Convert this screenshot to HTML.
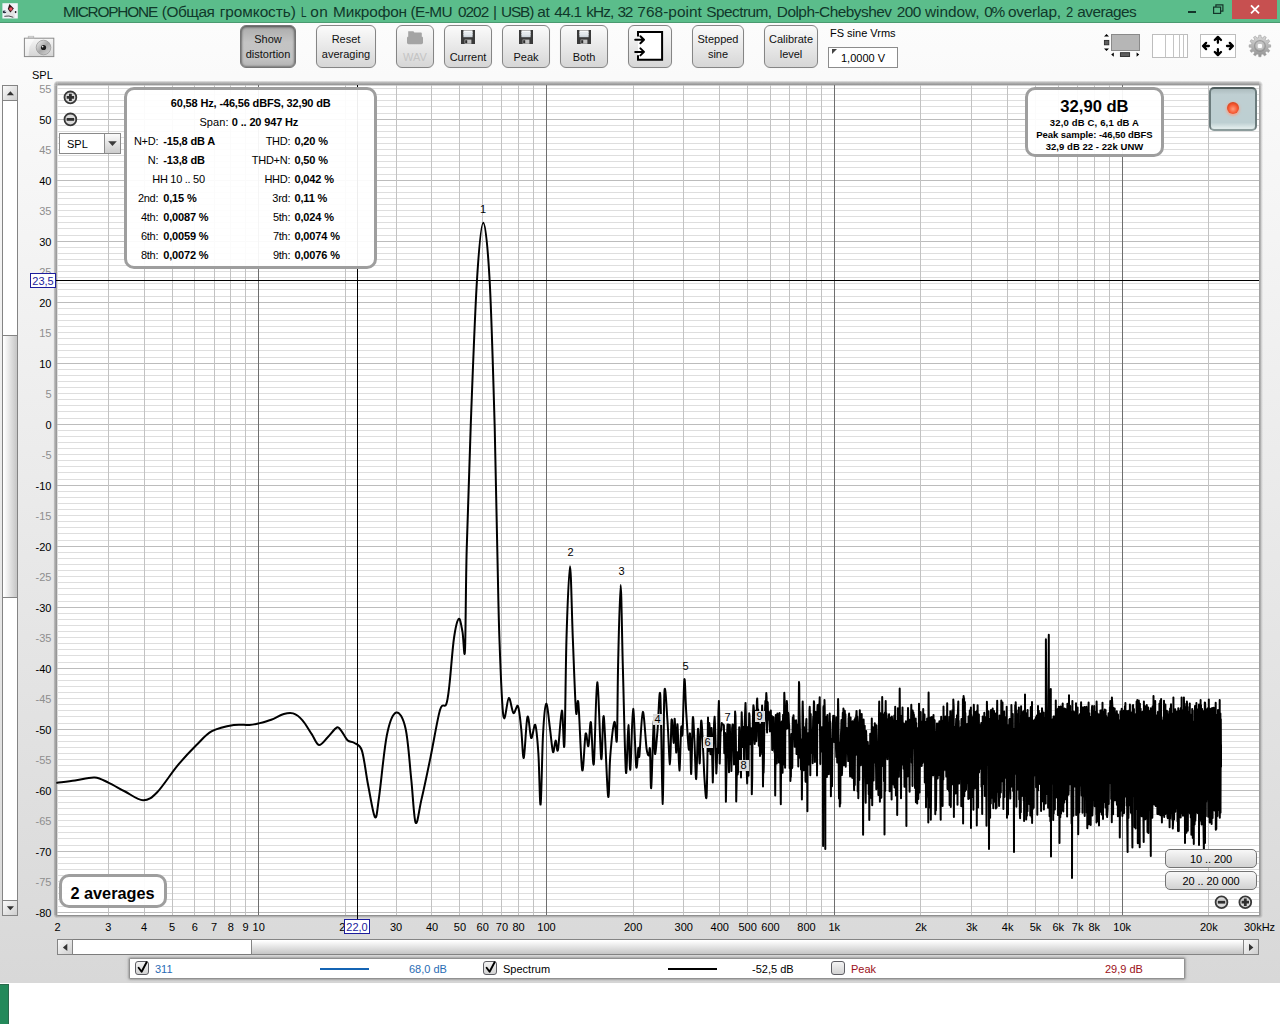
<!DOCTYPE html>
<html lang="en">
<head>
<meta charset="utf-8">
<title>RTA</title>
<style>
*{box-sizing:border-box;margin:0;padding:0}
html,body{width:1280px;height:1024px;overflow:hidden;background:#fff}
body{position:relative;font-family:"Liberation Sans",sans-serif;font-size:11px;color:#000}
.abs{position:absolute}
#title{left:0;top:0;width:1280px;height:23px;background:#5bbd8b;border-bottom:1px solid #4a9a70}
#ttext{left:0;top:1px;width:1200px;height:21px;font-size:15.4px;line-height:21px;color:#10382a;white-space:nowrap}
#ttext span{position:absolute;top:0;white-space:nowrap}
#close{left:1232px;top:0;width:45px;height:19px;background:#c75050}
#win{left:0;top:23px;width:1280px;height:960px;background:linear-gradient(#fcfcfc,#d8d8d8)}
#strip{left:0;top:984px;width:9px;height:40px;background:#23895a;border-top:1px solid #2a6a4c;border-right:1px solid #2a6a4c}
.btn{position:absolute;top:25px;height:43px;border:1px solid #858585;border-radius:6px;background:linear-gradient(#fbfbfb,#d6d6d6);text-align:center;font-size:11px;line-height:15px;color:#111;box-shadow:0 0 1px rgba(0,0,0,.15)}
.btn.two{padding-top:6px}
.btn.ico{padding-top:24px}
.btn.pressed{background:linear-gradient(#ababab,#c4c4c4 40%,#c2c2c2 80%,#b4b4b4);border-color:#747474;box-shadow:inset 0 1px 3px rgba(0,0,0,.4),inset 0 0 2px 1px rgba(0,0,0,.25)}
.btn.dis{color:#c4c4c4}
.btn svg{position:absolute;left:50%;top:4px;margin-left:-8px}
.ylab{position:absolute;left:10px;width:41.5px;text-align:right;font-size:11px;line-height:12px;height:12px}
.ylab.m{color:#8e8e8e}
.xlab{position:absolute;top:921px;width:40px;margin-left:-20px;text-align:center;font-size:11px;line-height:12px;height:12px;white-space:nowrap}
.box{position:absolute;border:3px solid #9e9e9e;border-radius:10px;background:rgba(255,255,255,.93)}
.row{position:absolute;left:0;height:13px;line-height:13px;font-size:11px;white-space:nowrap;letter-spacing:-.28px}
.row b{font-weight:bold;letter-spacing:-.15px}
.l1{left:0;width:31.5px;text-align:right}
.hl{position:absolute;font-size:11px;line-height:11px;height:11px;width:10px;margin-left:-5px;text-align:center}
.hl.g{background:#dcdcdc}
.cur{position:absolute;border:1px solid #1c1c9c;background:#fff;color:#1c1c9c;font-size:11px;line-height:15px;text-align:center}
.sbtn{position:absolute;left:1165px;width:92px;height:19px;border:1px solid #747474;border-radius:5px;background:linear-gradient(#f8f8f8,#d2d2d2);font-size:11px;line-height:18px;text-align:center;letter-spacing:-.1px}
.cb{position:absolute;top:961px;width:14px;height:14px;border:1px solid #5e5e64;border-radius:3px;background:linear-gradient(#f4f4f4,#d2d2d2)}
.lg{position:absolute;top:963px;font-size:11px;line-height:12px;white-space:nowrap}
</style>
</head>
<body>
<div id="win" class="abs"></div>
<div id="title" class="abs"></div>
<div id="ttext" class="abs"><span style="left:63.05px;letter-spacing:-1.213px">MICROPHONE</span><span style="left:161.80px;letter-spacing:-0.470px">(Общая</span><span style="left:219.80px;letter-spacing:-0.077px">громкость)</span><span style="left:300.50px;transform:scaleX(0.642);transform-origin:0 0">L</span><span style="left:310.30px;letter-spacing:0.387px">on</span><span style="left:333.05px;letter-spacing:-0.137px">Микрофон</span><span style="left:410.55px;letter-spacing:-0.611px">(E-MU</span><span style="left:458.05px;letter-spacing:-1.025px">0202</span><span style="left:492.90px;letter-spacing:-1.300px">|</span><span style="left:501.05px;letter-spacing:-1.158px">USB)</span><span style="left:537.30px;letter-spacing:-0.347px">at</span><span style="left:554.30px;letter-spacing:-0.705px">44.1</span><span style="left:586.30px;letter-spacing:-0.974px">kHz,</span><span style="left:617.55px;letter-spacing:-1.362px">32</span><span style="left:637.30px;letter-spacing:0.051px">768-point</span><span style="left:706.30px;letter-spacing:-0.555px">Spectrum,</span><span style="left:776.80px;letter-spacing:-0.513px">Dolph-Chebyshev</span><span style="left:896.80px;letter-spacing:-0.596px">200</span><span style="left:925.05px;letter-spacing:-0.052px">window,</span><span style="left:984.30px;letter-spacing:-1.425px">0%</span><span style="left:1008.05px;letter-spacing:-0.264px">overlap,</span><span style="left:1065.75px;transform:scaleX(0.847);transform-origin:0 0">2</span><span style="left:1077.30px;letter-spacing:-0.554px">averages</span></div>
<div id="close" class="abs"></div>
<div id="strip" class="abs"></div>

<!-- toolbar buttons -->
<div class="btn two pressed" style="left:240px;width:56px">Show<br>distortion</div>
<div class="btn two" style="left:316px;width:60px">Reset<br>averaging</div>
<div class="btn ico dis" style="left:396px;width:38px">WAV</div>
<div class="btn ico" style="left:444px;width:48px">Current</div>
<div class="btn ico" style="left:502px;width:48px">Peak</div>
<div class="btn ico" style="left:560px;width:48px">Both</div>
<div class="btn" style="left:628px;width:44px"></div>
<div class="btn two" style="left:692px;width:52px">Stepped<br>sine</div>
<div class="btn two" style="left:764px;width:54px">Calibrate<br>level</div>
<div class="abs" style="left:830px;top:27px;font-size:11px;line-height:12px">FS sine Vrms</div>
<div class="abs" style="left:828px;top:47px;width:70px;height:21px;border:1px solid #8c8c8c;background:#fff;font-size:11px;line-height:20px;padding-left:12px">1,0000 V</div>

<div class="abs" style="left:32px;top:69px;font-size:11px;line-height:12px">SPL</div>

<div class="ylab" style="top:906.8px">-80</div>
<div class="ylab m" style="top:876.3px">-75</div>
<div class="ylab" style="top:845.8px">-70</div>
<div class="ylab m" style="top:815.3px">-65</div>
<div class="ylab" style="top:784.8px">-60</div>
<div class="ylab m" style="top:754.3px">-55</div>
<div class="ylab" style="top:723.8px">-50</div>
<div class="ylab m" style="top:693.3px">-45</div>
<div class="ylab" style="top:662.8px">-40</div>
<div class="ylab m" style="top:632.3px">-35</div>
<div class="ylab" style="top:601.8px">-30</div>
<div class="ylab m" style="top:571.3px">-25</div>
<div class="ylab" style="top:540.8px">-20</div>
<div class="ylab m" style="top:510.3px">-15</div>
<div class="ylab" style="top:479.8px">-10</div>
<div class="ylab m" style="top:449.3px">-5</div>
<div class="ylab" style="top:418.8px">0</div>
<div class="ylab m" style="top:388.3px">5</div>
<div class="ylab" style="top:357.8px">10</div>
<div class="ylab m" style="top:327.3px">15</div>
<div class="ylab" style="top:296.8px">20</div>
<div class="ylab m" style="top:266.3px">25</div>
<div class="ylab" style="top:235.8px">30</div>
<div class="ylab m" style="top:205.3px">35</div>
<div class="ylab" style="top:174.8px">40</div>
<div class="ylab m" style="top:144.3px">45</div>
<div class="ylab" style="top:113.8px">50</div>
<div class="ylab m" style="top:83.3px">55</div>
<div class="xlab" style="left:57.5px">2</div>
<div class="xlab" style="left:108.2px">3</div>
<div class="xlab" style="left:144.1px">4</div>
<div class="xlab" style="left:172.0px">5</div>
<div class="xlab" style="left:194.8px">6</div>
<div class="xlab" style="left:214.1px">7</div>
<div class="xlab" style="left:230.8px">8</div>
<div class="xlab" style="left:245.5px">9</div>
<div class="xlab" style="left:258.7px">10</div>
<div class="xlab" style="left:345.3px">20</div>
<div class="xlab" style="left:396.0px">30</div>
<div class="xlab" style="left:432.0px">40</div>
<div class="xlab" style="left:459.9px">50</div>
<div class="xlab" style="left:482.7px">60</div>
<div class="xlab" style="left:501.9px">70</div>
<div class="xlab" style="left:518.6px">80</div>
<div class="xlab" style="left:546.5px">100</div>
<div class="xlab" style="left:633.2px">200</div>
<div class="xlab" style="left:683.8px">300</div>
<div class="xlab" style="left:719.8px">400</div>
<div class="xlab" style="left:747.7px">500</div>
<div class="xlab" style="left:770.5px">600</div>
<div class="xlab" style="left:806.5px">800</div>
<div class="xlab" style="left:834.3px">1k</div>
<div class="xlab" style="left:921.0px">2k</div>
<div class="xlab" style="left:971.7px">3k</div>
<div class="xlab" style="left:1007.6px">4k</div>
<div class="xlab" style="left:1035.5px">5k</div>
<div class="xlab" style="left:1058.3px">6k</div>
<div class="xlab" style="left:1077.6px">7k</div>
<div class="xlab" style="left:1094.3px">8k</div>
<div class="xlab" style="left:1122.2px">10k</div>
<div class="xlab" style="left:1208.8px">20k</div>
<div class="xlab" style="left:1259.5px">30kHz</div>

<!-- plot -->

<svg class="abs" style="left:0;top:0" width="1280" height="1024" viewBox="0 0 1280 1024" font-family="Liberation Sans, sans-serif">
<defs>
<linearGradient id="fL" x1="0" y1="0" x2="1" y2="0"><stop offset="0" stop-color="#737373" stop-opacity="0"/><stop offset=".28" stop-color="#737373" stop-opacity=".4"/><stop offset=".62" stop-color="#6c6c6c" stop-opacity=".6"/><stop offset="1" stop-color="#646464" stop-opacity=".68"/></linearGradient>
<linearGradient id="fT" x1="0" y1="0" x2="0" y2="1"><stop offset="0" stop-color="#737373" stop-opacity="0"/><stop offset=".28" stop-color="#737373" stop-opacity=".4"/><stop offset=".62" stop-color="#6c6c6c" stop-opacity=".6"/><stop offset="1" stop-color="#5f5f5f" stop-opacity=".74"/></linearGradient>
<linearGradient id="fR" x1="0" y1="0" x2="1" y2="0"><stop offset="0" stop-color="#5a5a5a" stop-opacity=".75"/><stop offset=".3" stop-color="#646464" stop-opacity=".5"/><stop offset=".65" stop-color="#737373" stop-opacity=".2"/><stop offset="1" stop-color="#737373" stop-opacity="0"/></linearGradient>
<linearGradient id="fB" x1="0" y1="0" x2="0" y2="1"><stop offset="0" stop-color="#5a5a5a" stop-opacity=".75"/><stop offset=".3" stop-color="#646464" stop-opacity=".45"/><stop offset=".65" stop-color="#737373" stop-opacity=".18"/><stop offset="1" stop-color="#737373" stop-opacity="0"/></linearGradient>
<radialGradient id="fTL" cx="1" cy="1" r="1"><stop offset="0" stop-color="#646464" stop-opacity=".7"/><stop offset=".38" stop-color="#6c6c6c" stop-opacity=".6"/><stop offset=".72" stop-color="#737373" stop-opacity=".4"/><stop offset="1" stop-color="#737373" stop-opacity="0"/></radialGradient>
<radialGradient id="fTR" cx="0" cy="1" r="1"><stop offset="0" stop-color="#5f5f5f" stop-opacity=".72"/><stop offset=".35" stop-color="#6c6c6c" stop-opacity=".5"/><stop offset=".7" stop-color="#737373" stop-opacity=".25"/><stop offset="1" stop-color="#737373" stop-opacity="0"/></radialGradient>
<radialGradient id="fBR" cx="0" cy="0" r="1"><stop offset="0" stop-color="#5a5a5a" stop-opacity=".7"/><stop offset=".4" stop-color="#6c6c6c" stop-opacity=".4"/><stop offset="1" stop-color="#737373" stop-opacity="0"/></radialGradient>
<radialGradient id="fBL" cx="1" cy="0" r="1"><stop offset="0" stop-color="#5f5f5f" stop-opacity=".7"/><stop offset=".4" stop-color="#6c6c6c" stop-opacity=".45"/><stop offset="1" stop-color="#737373" stop-opacity="0"/></radialGradient>
</defs>
<rect x="53.300" y="85.600" width="4.200" height="829.400" fill="url(#fL)"/>
<rect x="57.500" y="80.600" width="1201.600" height="5" fill="url(#fT)"/>
<rect x="1259.100" y="85.600" width="4" height="829.400" fill="url(#fR)"/>
<rect x="57.500" y="915" width="1201.600" height="3.600" fill="url(#fB)"/>
<rect x="53.300" y="80.600" width="4.200" height="5" fill="url(#fTL)"/>
<rect x="1259.100" y="80.600" width="4" height="5" fill="url(#fTR)"/>
<rect x="1259.100" y="915" width="4" height="3.600" fill="url(#fBR)"/>
<rect x="53.300" y="915" width="4.200" height="3.600" fill="url(#fBL)"/>
<rect x="57.500" y="85.600" width="1201.600" height="829.400" fill="#fff"/>
<path d="M57 906.5H1259M57 899.5H1259M57 893.5H1259M57 887.5H1259M57 881.5H1259M57 875.5H1259M57 869.5H1259M57 863.5H1259M57 857.5H1259M57 845.5H1259M57 838.5H1259M57 832.5H1259M57 826.5H1259M57 820.5H1259M57 814.5H1259M57 808.5H1259M57 802.5H1259M57 796.5H1259M57 784.5H1259M57 777.5H1259M57 771.5H1259M57 765.5H1259M57 759.5H1259M57 753.5H1259M57 747.5H1259M57 741.5H1259M57 735.5H1259M57 723.5H1259M57 716.5H1259M57 710.5H1259M57 704.5H1259M57 698.5H1259M57 692.5H1259M57 686.5H1259M57 680.5H1259M57 674.5H1259M57 662.5H1259M57 655.5H1259M57 649.5H1259M57 643.5H1259M57 637.5H1259M57 631.5H1259M57 625.5H1259M57 619.5H1259M57 613.5H1259M57 601.5H1259M57 594.5H1259M57 588.5H1259M57 582.5H1259M57 576.5H1259M57 570.5H1259M57 564.5H1259M57 558.5H1259M57 552.5H1259M57 540.5H1259M57 533.5H1259M57 527.5H1259M57 521.5H1259M57 515.5H1259M57 509.5H1259M57 503.5H1259M57 497.5H1259M57 491.5H1259M57 479.5H1259M57 472.5H1259M57 466.5H1259M57 460.5H1259M57 454.5H1259M57 448.5H1259M57 442.5H1259M57 436.5H1259M57 430.5H1259M57 418.5H1259M57 411.5H1259M57 405.5H1259M57 399.5H1259M57 393.5H1259M57 387.5H1259M57 381.5H1259M57 375.5H1259M57 369.5H1259M57 357.5H1259M57 350.5H1259M57 344.5H1259M57 338.5H1259M57 332.5H1259M57 326.5H1259M57 320.5H1259M57 314.5H1259M57 308.5H1259M57 296.5H1259M57 289.5H1259M57 283.5H1259M57 277.5H1259M57 271.5H1259M57 265.5H1259M57 259.5H1259M57 253.5H1259M57 247.5H1259M57 235.5H1259M57 228.5H1259M57 222.5H1259M57 216.5H1259M57 210.5H1259M57 204.5H1259M57 198.5H1259M57 192.5H1259M57 186.5H1259M57 174.5H1259M57 167.5H1259M57 161.5H1259M57 155.5H1259M57 149.5H1259M57 143.5H1259M57 137.5H1259M57 131.5H1259M57 125.5H1259M57 113.5H1259M57 106.5H1259M57 100.5H1259M57 94.5H1259M57 88.5H1259" stroke="#dedede" stroke-width="1" fill="none"/>
<path d="M57 912.5H1259M57 851.5H1259M57 790.5H1259M57 729.5H1259M57 668.5H1259M57 607.5H1259M57 546.5H1259M57 485.5H1259M57 424.5H1259M57 363.5H1259M57 302.5H1259M57 241.5H1259M57 180.5H1259M57 119.5H1259" stroke="#bcbcbc" stroke-width="1" fill="none"/>
<path d="M108.5 85V915M144.5 85V915M172.5 85V915M194.5 85V915M214.5 85V915M230.5 85V915M245.5 85V915M345.5 85V915M396.5 85V915M431.5 85V915M459.5 85V915M482.5 85V915M501.5 85V915M518.5 85V915M533.5 85V915M633.5 85V915M683.5 85V915M719.5 85V915M747.5 85V915M770.5 85V915M789.5 85V915M806.5 85V915M821.5 85V915M920.5 85V915M971.5 85V915M1007.5 85V915M1035.5 85V915M1058.5 85V915M1077.5 85V915M1094.5 85V915M1109.5 85V915M1208.5 85V915" stroke="#c2c2c2" stroke-width="1" fill="none"/>
<path d="M258.5 85V915M546.5 85V915M834.5 85V915M1122.5 85V915" stroke="#6e6e6e" stroke-width="1" fill="none"/>
<path d="M57.2 782.8C60.2 782.4 68.8 781.4 75.0 780.5C81.2 779.6 89.1 777.1 94.7 777.5C100.3 777.9 103.7 780.5 108.8 782.8C113.8 785.1 119.3 788.6 125.0 791.5C130.7 794.4 137.7 800.2 143.1 800.3C148.5 800.4 151.5 798.0 157.2 792.2C162.9 786.4 171.0 773.4 177.5 765.6C184.0 757.8 190.5 751.0 196.2 745.3C202.0 739.6 205.7 734.6 211.9 731.2C218.2 727.9 227.5 726.0 233.8 725.0C240.0 724.0 245.2 725.3 249.4 725.0C253.6 724.7 255.1 724.3 258.8 723.4C262.4 722.5 267.1 721.3 271.2 719.7C275.4 718.1 280.1 715.0 283.8 714.0C287.4 713.0 290.0 712.4 293.1 713.4C296.2 714.4 299.4 716.8 302.5 720.3C305.6 723.8 309.1 730.3 311.9 734.4C314.6 738.5 316.4 744.5 319.0 745.0C321.6 745.5 324.5 740.4 327.5 737.5C330.5 734.6 334.6 728.5 336.9 727.5C339.2 726.5 339.7 729.1 341.5 731.2C343.3 733.4 345.7 738.7 347.8 740.6C349.9 742.5 351.6 741.1 354.0 742.8C356.4 744.5 359.5 743.6 361.9 750.6C364.2 757.6 365.9 773.9 368.1 785.0C370.3 796.1 373.2 815.1 375.0 817.2C376.8 819.3 377.0 811.2 379.0 797.5C381.0 783.8 384.0 749.2 386.9 735.0C389.8 720.8 393.1 713.5 396.2 712.5C399.4 711.5 403.1 717.7 405.6 728.8C408.1 739.8 409.6 763.1 411.2 778.8C412.9 794.4 413.9 818.9 415.6 822.5C417.3 826.1 418.8 811.5 421.2 800.6C423.8 789.7 427.5 772.0 430.6 756.9C433.7 741.8 437.4 718.8 440.0 710.0C442.6 701.2 444.7 708.6 446.2 704.4C447.8 700.2 448.1 696.1 449.4 685.0C450.7 673.9 452.4 649.0 454.0 638.0C455.6 627.0 457.3 619.8 458.8 618.8C460.2 617.7 461.5 626.7 462.5 631.9C463.5 637.1 464.3 663.8 465.0 650.0C465.7 636.2 465.7 587.1 466.7 549.4C467.7 511.7 469.1 468.5 470.8 423.6C472.5 378.7 474.9 313.3 477.0 279.8C479.1 246.3 481.2 222.8 483.3 222.8C485.4 222.8 487.7 246.3 489.6 279.8C491.5 313.3 493.3 378.7 494.6 423.6C495.9 468.5 496.5 513.7 497.3 549.4C498.1 585.1 498.4 610.2 499.4 638.0C500.4 665.8 501.8 706.2 503.4 716.2C505.0 726.2 507.1 698.5 508.8 698.0C510.4 697.5 511.9 711.6 513.4 713.0C514.9 714.4 516.7 703.6 518.0 706.2C519.3 708.9 520.3 720.2 521.2 728.8C522.2 737.3 522.7 759.8 523.8 757.8C524.8 755.8 526.2 720.2 527.5 716.9C528.8 713.6 530.0 736.6 531.2 738.0C532.5 739.4 534.1 722.4 535.3 725.0C536.5 727.6 537.5 740.5 538.4 753.8C539.3 767.0 539.8 807.5 540.6 804.4C541.4 801.3 542.1 751.8 543.0 735.0C543.9 718.2 545.1 704.8 546.2 703.8C547.4 702.7 548.9 720.7 550.0 728.8C551.1 736.8 552.1 750.0 553.0 752.0C553.9 754.0 554.8 741.0 555.6 740.6C556.4 740.2 557.0 754.7 558.0 749.7C559.0 744.7 560.8 711.4 561.9 710.6C563.0 709.8 563.6 757.1 564.4 745.0C565.2 732.9 565.6 667.8 566.5 638.0C567.4 608.2 569.0 566.2 570.0 566.2C571.0 566.2 571.8 613.8 572.8 638.0C573.8 662.2 575.1 700.7 576.0 711.5C576.9 722.3 577.4 693.2 578.4 703.0C579.4 712.8 581.0 764.9 582.2 770.0C583.4 775.1 584.6 737.7 585.6 733.8C586.6 729.8 587.5 748.2 588.4 746.2C589.3 744.3 590.0 719.2 590.9 722.2C591.8 725.2 592.7 770.7 593.8 764.0C594.8 757.3 596.0 683.1 597.2 682.2C598.5 681.3 600.2 753.0 601.2 758.8C602.3 764.5 602.6 710.4 603.8 716.6C604.9 722.9 607.0 789.8 608.1 796.2C609.2 802.8 609.2 768.0 610.3 755.6C611.3 743.2 613.3 724.5 614.4 721.9C615.5 719.3 616.3 749.5 616.9 740.0C617.5 730.5 617.5 690.8 618.1 665.0C618.7 639.2 619.8 585.0 620.6 585.0C621.4 585.0 621.9 633.9 622.8 665.0C623.7 696.1 625.0 761.9 625.9 771.9C626.8 781.9 627.7 725.4 628.4 725.0C629.1 724.6 629.5 772.4 630.3 769.7C631.1 767.0 632.1 709.3 633.1 708.8C634.1 708.2 635.4 760.1 636.2 766.6C637.1 773.1 637.9 749.6 638.4 747.8C638.9 746.0 638.7 761.6 639.4 755.6C640.1 749.6 641.6 713.0 642.8 711.9C644.0 710.8 645.6 741.5 646.6 748.8C647.6 756.0 648.2 755.5 648.8 755.6C649.3 755.7 649.6 744.0 650.0 749.4C650.4 754.8 650.6 792.5 651.2 787.8C651.9 783.1 653.1 726.9 653.8 721.2C654.4 715.6 654.4 752.4 655.0 754.0C655.6 755.6 656.6 740.4 657.5 730.6C658.4 720.8 659.4 683.1 660.3 695.3C661.2 707.5 662.1 804.5 662.8 804.0C663.5 803.5 663.6 706.0 664.4 692.2C665.2 678.4 666.6 709.2 667.5 721.2C668.4 733.3 669.3 764.7 670.0 764.4C670.7 764.1 671.0 723.3 671.6 719.7C672.2 716.1 673.2 743.2 673.8 743.0C674.3 742.8 674.3 717.2 674.7 718.8C675.1 720.3 675.8 751.6 676.2 752.5C676.7 753.4 677.0 721.4 677.5 724.4C678.0 727.4 678.8 770.1 679.4 770.6C680.0 771.1 680.7 733.6 681.2 727.5C681.8 721.4 682.0 741.8 682.5 733.8C683.0 725.8 683.8 683.1 684.4 679.5C685.0 675.9 685.5 700.2 686.2 711.9C687.0 723.5 688.1 745.8 688.8 749.4C689.4 753.0 689.6 729.7 690.0 733.8C690.4 737.8 690.8 776.4 691.2 773.8C691.7 771.1 692.3 723.6 692.8 718.0C693.3 712.4 693.8 729.8 694.4 740.0C695.0 750.2 695.6 780.8 696.2 779.0C696.9 777.2 697.4 731.6 698.0 729.0C698.6 726.4 699.2 764.8 699.7 763.4C700.2 762.0 700.6 721.9 701.2 720.6C701.9 719.3 702.9 746.1 703.4 755.6C703.9 765.1 703.9 770.8 704.4 777.5C704.9 784.2 706.0 805.6 706.6 795.6C707.2 785.6 707.8 730.5 708.0 717.5L708.3 751.1L708.7 737.1L709.2 723.0L709.6 725.9L710.1 749.4L710.5 754.2L711.0 733.4L711.5 728.1L711.9 739.8L712.3 762.2L712.8 782.4L713.2 767.0L713.7 734.6L714.1 722.9L714.6 716.8L715.0 724.3L715.4 736.1L715.9 757.5L716.3 773.4L716.7 767.1L717.2 751.0L717.6 748.6L718.0 753.1L718.4 712.2L718.9 700.9L719.3 718.7L719.7 763.6L720.1 747.7L720.6 730.7L721.0 731.0L721.4 729.3L721.8 723.1L722.2 724.5L722.6 724.5L723.0 724.5L723.4 724.5L723.9 725.5L724.3 753.2L724.7 735.4L725.1 732.9L725.5 756.0L725.9 801.8L726.3 779.5L726.7 764.4L727.1 735.1L727.5 724.5L727.9 724.5L728.3 724.5L728.6 743.0L729.0 772.2L729.4 725.5L729.8 724.9L730.2 739.0L730.6 752.3L731.0 757.0L731.4 771.1L731.7 755.9L732.1 728.1L732.5 724.5L732.9 724.5L733.3 728.7L733.6 740.0L734.0 764.5L734.4 763.9L734.8 729.2L735.1 711.6L735.5 715.8L735.9 740.7L736.2 801.4L736.6 784.0L737.0 763.5L737.4 752.3L737.7 774.4L738.1 769.7L738.4 772.1L738.8 754.8L739.2 727.3L739.5 736.2L739.9 756.9L740.2 751.2L740.6 754.1L741.0 777.6L741.3 732.1L741.7 712.2L742.0 722.4L742.4 743.3L742.7 747.1L743.1 733.7L743.4 727.1L743.8 737.4L744.1 762.8L744.5 730.5L744.8 720.7L745.1 712.8L745.5 702.9L745.8 712.0L746.2 737.9L746.5 766.7L746.8 771.9L747.2 783.4L747.5 731.4L747.9 727.1L748.2 751.5L748.5 775.8L748.9 733.3L749.2 713.3L749.5 715.3L749.9 729.9L750.2 744.3L750.5 737.6L750.8 728.6L751.2 728.2L751.5 736.0L751.8 794.2L752.2 778.4L752.5 739.3L752.8 725.3L753.1 712.1L753.4 705.2L753.8 707.6L754.1 719.5L754.4 738.2L754.7 744.0L755.0 724.8L755.4 710.8L755.7 711.7L756.0 723.0L756.3 741.3L756.6 735.3L756.9 701.5L757.2 698.4L757.6 709.8L757.9 711.5L758.2 709.5L758.5 721.9L758.8 745.8L759.1 738.8L759.4 724.2L759.7 740.0L760.0 756.0L760.3 740.0L760.6 754.2L760.9 750.6L761.2 724.2L761.5 739.9L761.8 726.1L762.1 705.5L762.4 715.8L762.7 751.1L763.0 786.4L763.3 766.3L763.6 772.7L763.9 761.4L764.2 735.1L764.5 722.7L764.8 718.6L765.1 708.9L765.4 700.9L765.7 701.6L766.0 701.0L766.3 693.1L766.6 697.3L766.8 721.2L767.1 732.5L767.4 712.0L767.7 702.3L768.0 712.7L768.3 719.5L768.6 713.0L768.8 712.1L769.1 714.7L769.4 719.8L769.7 725.2L770.0 731.5L770.3 730.3L770.5 714.8L770.8 710.5L771.1 727.7L771.4 728.2L771.7 715.7L771.9 724.7L772.2 750.1L772.5 743.2L772.8 728.3L773.0 721.4L773.3 716.9L773.6 717.5L773.9 729.3L774.1 743.4L774.4 752.0L774.7 739.0L774.9 745.1L775.2 795.5L775.5 756.2L775.8 715.0L776.0 717.7L776.3 740.7L776.6 755.9L776.8 763.5L777.1 726.8L777.4 713.4L777.6 718.1L777.9 726.3L778.2 737.9L778.4 744.3L778.7 743.5L778.9 762.6L779.2 736.2L779.5 713.0L779.7 720.8L780.0 725.6L780.2 737.5L780.5 783.7L780.8 804.2L781.0 774.6L781.3 755.7L781.5 729.3L781.8 721.6L782.0 727.3L782.3 744.1L782.6 772.8L782.8 730.5L783.1 714.8L783.3 731.9L783.6 764.4L783.8 749.1L784.1 706.9L784.3 692.7L784.6 699.7L784.8 726.3L785.1 767.8L785.3 732.0L785.6 724.8L785.8 729.5L786.1 719.0L786.3 711.0L786.6 706.0L786.8 701.0L787.1 704.6L787.3 718.9L787.5 728.3L787.8 718.6L788.0 712.6L788.3 713.5L788.5 714.9L788.8 721.4L789.0 724.5L789.2 725.2L789.5 750.4L789.7 768.3L790.0 748.6L790.2 748.8L790.4 780.9L790.7 770.8L790.9 777.0L791.2 748.9L791.4 734.0L791.6 740.3L791.9 755.3L792.1 768.2L792.3 767.0L792.6 729.9L792.8 717.4L793.0 723.4L793.3 719.1L793.5 715.3L793.7 721.5L794.0 720.3L794.2 720.4L794.4 733.2L794.7 746.8L794.9 744.8L795.1 730.0L795.4 727.1L795.6 740.7L795.8 736.0L796.1 720.2L796.3 724.0L796.5 753.9L796.7 746.8L797.0 731.2L797.2 744.3L797.4 747.3L797.6 724.4L797.9 724.8L798.1 750.0L798.3 766.5L798.5 733.0L798.8 700.1L799.0 682.0L799.2 684.3L799.4 703.7L799.7 720.2L799.9 728.3L800.1 741.3L800.3 758.1L800.5 741.4L800.8 739.2L801.0 769.5L801.2 762.7L801.4 739.7L801.6 751.0L801.9 799.4L802.1 773.7L802.3 752.1L802.5 712.0L802.7 701.6L802.9 711.6L803.2 723.7L803.4 732.8L803.6 770.2L803.8 744.9L804.0 727.1L804.2 733.1L804.5 746.2L804.7 747.6L804.9 733.8L805.1 737.6L805.3 757.7L805.5 780.5L805.7 781.8L805.9 751.3L806.1 724.7L806.4 719.1L806.6 744.9L806.8 758.1L807.0 748.2L807.2 769.9L807.4 811.3L807.6 762.9L807.8 739.1L808.0 733.2L808.2 742.5L808.4 739.6L808.7 740.0L808.9 751.9L809.1 764.4L809.3 736.1L809.5 710.2L809.7 706.7L809.9 713.6L810.1 737.6L810.3 775.3L810.5 730.7L810.7 713.9L810.9 726.2L811.1 752.2L811.3 753.1L811.5 747.9L811.7 745.5L811.9 744.0L812.1 740.5L812.3 729.5L812.5 730.8L812.7 763.2L812.9 739.1L813.1 720.5L813.3 716.4L813.5 719.7L813.7 713.6L813.9 701.3L814.1 702.3L814.3 715.4L814.5 729.3L814.7 750.6L814.9 761.9L815.1 737.3L815.3 732.5L815.5 720.3L815.7 712.1L815.9 715.5L816.1 722.2L816.3 722.0L816.5 720.4L816.7 722.4L816.9 740.3L817.0 775.4L817.2 739.7L817.4 708.0L817.6 705.0L817.8 716.1L818.0 717.9L818.2 723.1L818.4 722.7L818.6 714.2L818.8 707.2L819.0 704.2L819.2 709.2L819.3 712.9L819.5 703.7L819.7 697.3L819.9 708.7L820.1 740.0L820.3 764.1L820.5 742.5L820.7 726.8L820.8 727.2L821.0 735.0L821.2 738.1L821.4 736.3L821.6 739.9L821.8 751.4L822.0 746.8L822.2 727.4L822.3 732.0L822.5 737.8L822.7 735.8L822.9 748.2L823.1 846.0L823.3 727.8L823.4 707.9L823.6 706.1L823.8 715.7L824.0 730.1L824.2 741.5L824.4 715.3L824.5 700.0L824.7 707.9L824.9 729.9L825.1 763.2L825.3 849.0L825.4 751.3L825.6 718.3L825.8 717.1L826.0 731.5L826.2 724.2L826.3 732.7L826.5 738.8L826.7 744.1L826.9 776.9L827.1 750.7L827.2 716.7L827.4 715.1L827.6 738.0L827.8 744.0L828.0 723.0L828.1 726.0L828.3 725.1L828.5 732.9L828.7 754.5L828.8 774.3L829.0 757.2L829.2 740.5L829.4 741.1L829.5 723.4L829.7 713.5L829.9 722.1L830.1 726.8L830.2 721.5L830.4 724.1L830.6 732.2L830.8 751.4L830.9 796.2L831.1 771.2L831.3 746.7L831.4 749.1L831.6 764.4L831.8 781.6L832.0 786.3L832.1 775.2L832.3 749.4L832.5 738.7L832.6 742.2L832.8 739.0L833.0 720.6L833.2 715.8L833.3 725.7L833.5 730.6L833.7 726.0L833.8 718.1L834.0 725.7L834.2 742.0L834.3 732.4L834.5 716.0L834.7 717.9L834.8 728.9L835.0 730.7L835.2 737.2L835.3 731.3L835.5 726.0L835.7 726.6L835.8 735.9L836.0 748.4L836.2 752.9L836.3 757.0L836.5 750.5L836.7 727.4L836.8 717.3L837.0 729.2L837.2 762.5L837.3 750.4L837.5 728.0L837.7 725.6L837.8 721.4L838.0 705.9L838.1 699.1L838.3 708.4L838.5 727.1L838.6 738.1L838.8 781.4L839.0 798.5L839.1 748.5L839.3 742.6L839.4 753.7L839.6 777.2L839.8 806.6L839.9 773.9L840.1 768.8L840.3 803.7L840.4 789.1L840.6 754.0L840.7 744.8L840.9 736.0L841.1 731.1L841.2 729.8L841.4 722.4L841.5 720.1L841.7 738.0L841.8 775.1L842.0 773.2L842.2 765.1L842.3 740.1L842.5 729.6L842.6 721.4L842.8 712.7L843.0 715.8L843.1 727.6L843.3 723.2L843.4 708.5L843.6 710.9L843.7 733.8L843.9 765.3L844.0 763.1L844.2 737.7L844.4 738.0L844.5 743.7L844.7 719.3L844.8 710.8L845.0 721.4L845.1 734.8L845.3 726.0L845.4 714.2L845.6 729.0L845.7 766.8L845.9 757.4L846.1 748.0L846.2 744.2L846.4 746.9L846.5 740.6L846.7 732.5L846.8 728.0L847.0 730.5L847.1 733.9L847.3 743.7L847.4 748.3L847.6 748.1L847.7 736.7L847.9 732.7L848.0 753.8L848.2 761.1L848.3 754.5L848.5 731.2L848.6 717.9L848.8 718.4L848.9 714.7L849.1 713.6L849.2 728.8L849.4 760.8L849.5 751.7L849.7 745.7L849.8 756.2L850.0 772.5L850.1 776.6L850.3 746.7L850.4 718.5L850.6 717.6L850.7 740.7L850.9 774.7L851.0 776.3L851.2 758.3L851.3 739.3L851.4 726.6L851.6 727.4L851.7 745.8L851.9 769.0L852.0 775.1L852.2 777.8L852.3 777.9L852.5 737.0L852.6 721.3L852.8 757.4L852.9 756.0L853.1 739.9L853.2 753.9L853.3 743.4L853.5 747.8L853.6 753.4L853.8 757.2L853.9 780.3L854.1 790.2L854.2 756.0L854.4 736.0L854.5 719.7L854.6 734.9L854.8 785.0L854.9 761.4L855.1 736.4L855.2 718.6L855.3 718.1L855.5 751.0L855.6 755.1L855.8 743.2L855.9 734.7L856.1 718.6L856.2 714.7L856.3 716.3L856.5 710.9L856.6 711.0L856.8 723.2L856.9 740.2L857.0 748.2L857.2 736.3L857.3 716.6L857.5 720.9L857.6 765.3L857.7 791.5L857.9 768.9L858.0 744.9L858.2 760.0L858.3 798.2L858.4 792.6L858.6 761.1L858.7 751.8L858.9 754.5L859.0 748.3L859.1 768.2L859.3 780.1L859.4 736.0L859.5 723.2L859.7 717.0L859.8 710.2L860.0 717.6L860.2 739.0L860.4 729.8L860.8 765.2L860.9 728.0L861.2 728.5L861.5 718.0L861.7 714.0L862.0 734.6L862.1 727.8L862.4 752.6L862.7 736.8L862.9 784.6L863.1 834.7L863.5 732.7L863.6 719.6L863.9 728.9L864.0 731.3L864.4 739.1L864.7 725.7L864.9 755.3L865.2 753.3L865.3 774.7L865.7 802.7L866.0 741.3L866.1 730.9L866.5 743.1L866.8 751.5L866.9 756.6L867.0 783.3L867.4 748.8L867.7 752.4L867.8 742.0L868.3 769.7L868.4 745.6L868.7 794.2L868.8 756.7L869.1 772.2L869.3 819.9L869.7 748.4L870.0 768.5L870.2 733.7L870.5 754.9L870.6 754.3L870.7 772.6L871.3 797.9L871.5 753.8L871.6 740.5L871.8 718.4L872.2 805.3L872.5 771.3L872.6 767.6L873.0 727.2L873.1 728.4L873.5 778.9L873.6 780.4L873.9 748.0L874.1 738.8L874.4 762.4L874.6 758.8L874.8 723.3L875.3 760.6L875.4 742.1L875.5 728.3L875.8 748.3L876.3 789.2L876.5 725.3L876.6 729.6L877.0 753.2L877.2 742.0L877.3 749.5L877.6 745.6L877.9 772.9L878.0 764.6L878.4 794.9L878.5 779.8L879.0 716.7L879.2 701.6L879.5 742.3L879.6 748.1L879.9 801.8L880.0 749.2L880.3 713.2L880.7 753.8L881.0 796.8L881.3 797.7L881.4 759.4L881.6 747.2L881.8 764.7L882.0 755.9L882.2 697.0L882.7 745.0L882.9 716.6L883.0 717.9L883.3 766.2L883.6 727.4L884.0 781.2L884.1 755.8L884.4 713.9L884.5 834.4L884.9 712.5L885.2 791.0L885.4 727.7L885.7 700.9L886.0 733.3L886.1 735.0L886.3 713.3L886.5 715.5L886.7 757.2L887.1 749.2L887.4 759.2L887.6 723.2L887.9 742.7L888.2 736.1L888.4 719.0L888.5 724.8L888.9 715.1L889.1 714.2L889.5 766.7L889.6 791.3L889.9 761.8L890.1 759.4L890.3 726.7L890.6 771.6L890.9 717.6L891.1 735.4L891.2 743.9L891.6 799.6L891.9 716.6L892.1 720.6L892.4 769.7L892.6 735.1L892.8 729.4L893.0 753.6L893.2 769.5L893.5 784.5L893.8 725.6L894.3 715.5L894.5 752.0L894.6 787.5L894.8 735.5L895.2 706.8L895.4 760.8L895.8 754.1L895.9 795.5L896.2 791.7L896.4 732.3L896.6 773.1L896.8 721.0L897.2 815.1L897.5 766.8L897.6 759.3L897.9 708.2L898.1 756.0L898.4 740.3L898.8 776.8L899.0 722.0L899.1 720.3L899.4 737.6L899.7 688.5L900.0 726.8L900.1 733.2L900.3 716.5L900.6 733.4L901.0 798.3L901.1 786.0L901.3 716.2L901.7 749.1L901.9 733.2L902.0 725.2L902.4 714.8L902.5 707.4L902.9 761.7L903.0 764.8L903.1 729.9L903.6 768.7L903.9 723.4L904.1 744.7L904.5 786.7L904.6 769.9L904.7 738.0L905.1 726.1L905.3 773.8L905.7 783.0L905.9 721.2L906.4 826.0L906.5 724.4L906.7 762.4L906.9 725.7L907.0 740.8L907.4 776.4L907.6 740.6L908.0 708.1L908.2 713.7L908.4 772.6L908.6 743.1L908.9 775.9L909.2 719.5L909.4 773.3L909.6 791.7L909.9 721.1L910.2 755.6L910.5 732.8L910.7 725.2L910.9 730.2L911.3 704.7L911.5 727.5L911.6 716.9L911.8 762.8L912.0 711.0L912.5 786.1L912.5 761.0L912.7 710.6L913.1 734.0L913.4 712.4L913.7 748.3L913.9 714.7L914.1 730.1L914.3 745.6L914.5 736.4L915.0 781.2L915.0 787.9L915.4 719.7L915.7 718.5L915.9 802.2L916.2 723.1L916.4 777.6L916.8 734.0L917.0 768.2L917.2 803.6L917.4 748.0L917.6 780.0L917.9 728.4L918.0 727.9L918.3 799.1L918.6 772.9L918.9 717.0L919.0 703.8L919.3 756.0L919.6 792.6L920.0 741.0L920.1 738.3L920.5 765.3L920.7 712.0L921.0 764.0L921.2 752.6L921.5 721.8L921.6 721.6L921.7 766.1L922.1 734.4L922.4 763.3L922.8 743.0L923.0 723.4L923.2 709.0L923.5 761.7L923.7 741.9L923.9 725.6L924.2 750.4L924.5 715.0L924.5 714.6L924.8 782.5L925.3 759.2L925.4 721.8L925.7 726.1L925.9 777.3L926.0 807.2L926.2 722.2L926.8 768.0L927.0 737.2L927.1 718.5L927.3 763.6L927.6 796.5L927.9 736.9L928.3 822.5L928.5 705.9L928.6 692.6L928.9 734.3L929.0 722.3L929.2 739.9L929.5 729.1L930.0 807.6L930.1 790.4L930.3 717.5L930.6 742.1L930.8 819.7L931.2 776.4L931.4 726.2L931.5 745.8L931.8 717.0L932.2 729.1L932.4 744.1L932.6 721.3L932.8 747.3L933.1 775.6L933.2 725.5L933.5 715.0L933.8 760.8L934.1 751.9L934.3 727.7L934.6 720.3L935.0 746.7L935.3 814.3L935.4 744.1L935.7 740.4L935.9 810.5L936.2 793.2L936.5 731.8L936.8 743.2L936.9 723.4L937.1 723.7L937.3 766.7L937.6 728.9L937.7 778.5L938.0 761.6L938.5 723.2L938.5 726.4L939.0 772.2L939.2 775.1L939.4 721.3L939.9 769.4L940.0 753.0L940.1 755.1L940.4 799.3L940.7 819.8L940.9 729.6L941.2 716.8L941.4 774.1L941.6 720.6L942.0 770.4L942.3 793.7L942.4 733.6L942.6 806.0L942.8 746.1L943.1 720.7L943.3 779.4L943.5 706.6L944.0 765.7L944.0 757.3L944.2 725.1L944.5 743.9L944.6 734.2L945.0 769.8L945.4 716.4L945.5 745.7L945.6 719.2L946.1 741.7L946.3 776.4L946.5 774.0L946.9 733.1L947.2 703.2L947.5 789.1L947.8 740.8L948.0 779.7L948.1 776.4L948.3 731.9L948.6 744.6L949.0 790.9L949.0 734.6L949.4 716.8L949.6 805.0L949.9 731.4L950.1 784.2L950.3 711.3L950.6 727.7L950.8 806.9L951.2 760.0L951.4 715.7L951.6 778.5L952.0 735.0L952.2 750.0L952.4 710.3L952.6 731.6L952.7 784.2L953.0 773.9L953.3 699.5L953.7 707.1L953.9 817.1L954.1 765.3L954.2 736.8L954.7 789.6L954.8 726.9L955.1 740.3L955.4 767.0L955.6 793.4L955.8 730.9L956.2 718.8L956.4 741.7L956.7 734.0L957.0 715.2L957.2 721.3L957.5 804.8L957.6 779.1L957.7 717.8L958.3 701.5L958.5 781.7L958.7 720.8L959.0 754.4L959.1 783.5L959.3 746.8L959.5 765.5L959.9 746.0L960.0 737.5L960.4 776.1L960.6 749.5L960.8 727.1L961.3 806.3L961.4 722.5L961.5 718.9L961.9 791.3L962.2 772.1L962.4 740.5L962.7 762.4L962.9 699.1L963.1 823.5L963.3 710.7L963.6 696.0L963.9 733.9L964.1 698.3L964.3 796.2L964.9 702.0L965.0 791.2L965.2 776.8L965.3 713.1L965.6 741.9L966.0 789.8L966.2 780.4L966.5 760.9L966.7 764.4L966.8 731.6L967.2 723.9L967.4 764.4L967.7 782.7L968.0 739.8L968.3 799.0L968.5 716.6L968.7 768.1L968.9 721.0L969.1 798.5L969.5 721.3L969.8 710.5L970.0 753.7L970.3 786.4L970.4 720.6L970.9 707.5L971.0 828.0L971.0 754.5L971.3 714.9L971.6 729.2L971.7 771.7L972.2 772.3L972.5 717.6L972.5 736.6L972.8 797.3L973.1 747.2L973.4 809.8L973.5 744.1L973.8 704.7L974.3 729.9L974.4 778.8L974.7 788.5L974.9 722.9L975.3 714.7L975.4 784.5L975.6 711.9L975.9 759.2L976.0 720.5L976.2 767.0L976.5 723.9L976.8 825.6L977.1 710.5L977.3 782.8L977.6 705.3L978.0 742.6L978.1 807.4L978.2 718.1L978.8 750.1L978.9 714.4L979.0 772.5L979.3 725.6L979.7 746.1L979.8 725.1L980.4 733.3L980.5 768.8L980.6 765.8L980.8 730.9L981.3 722.9L981.5 786.8L981.5 762.2L981.6 723.9L982.2 813.9L982.3 757.7L982.5 751.6L982.7 716.4L983.2 719.7L983.4 783.9L983.5 768.3L983.9 727.1L984.2 780.2L984.3 712.8L984.8 796.1L984.9 739.6L985.1 717.0L985.4 765.6L985.7 728.4L985.8 763.1L986.1 742.8L986.5 825.8L986.6 805.3L986.9 701.7L987.2 713.9L987.4 753.6L987.7 719.5L987.8 764.8L988.1 719.6L988.4 752.4L988.6 711.2L988.8 780.6L989.0 849.0L989.4 719.6L989.6 778.3L989.9 718.9L990.1 817.7L990.2 724.1L990.8 803.6L991.0 718.6L991.0 709.9L991.2 753.9L991.5 797.8L991.8 731.0L992.1 750.6L992.3 721.1L992.7 708.5L992.8 769.5L993.3 808.2L993.5 729.1L993.8 799.0L994.0 710.9L994.0 720.7L994.5 801.7L994.5 775.6L994.7 729.7L995.4 760.2L995.5 718.3L995.7 713.5L995.9 808.5L996.0 759.2L996.1 715.3L996.6 807.6L996.8 733.0L997.2 700.8L997.5 759.9L997.6 729.6L997.7 791.8L998.4 736.2L998.5 791.2L998.6 720.6L998.7 788.7L999.1 805.9L999.5 721.3L999.5 715.6L999.9 797.6L1000.2 717.3L1000.3 751.0L1000.7 719.7L1000.8 792.6L1001.3 700.4L1001.5 773.9L1001.5 764.7L1001.9 722.0L1002.2 781.3L1002.5 703.3L1002.5 702.5L1002.7 759.2L1003.2 717.0L1003.4 809.0L1003.8 725.7L1003.9 751.7L1004.2 711.4L1004.4 797.1L1004.5 751.4L1005.0 717.1L1005.0 720.0L1005.2 776.6L1005.6 765.2L1005.9 723.8L1006.1 726.4L1006.3 778.1L1006.7 706.7L1007.0 817.7L1007.2 807.0L1007.4 739.7L1007.7 729.2L1008.0 794.1L1008.0 814.6L1008.3 725.1L1008.6 785.3L1008.9 725.2L1009.2 790.2L1009.3 719.6L1009.8 718.9L1009.9 782.9L1010.3 798.6L1010.5 734.7L1010.9 719.3L1010.9 772.6L1011.2 786.7L1011.4 705.1L1011.7 719.3L1012.0 773.4L1012.1 728.0L1012.3 773.0L1012.5 744.2L1012.8 714.0L1013.1 791.1L1013.3 728.7L1013.6 732.0L1014.0 852.0L1014.1 738.7L1014.3 774.7L1014.5 742.1L1014.9 773.0L1015.2 705.2L1015.3 748.7L1015.6 759.1L1015.7 702.3L1016.3 721.6L1016.4 806.8L1016.8 714.1L1016.9 766.9L1017.4 771.9L1017.5 723.8L1017.5 718.0L1018.0 789.6L1018.2 778.8L1018.3 710.2L1018.8 760.7L1018.9 707.4L1019.0 727.0L1019.2 799.4L1019.6 726.1L1019.8 812.8L1020.1 818.3L1020.2 725.0L1020.8 812.3L1021.0 720.5L1021.1 706.2L1021.2 794.7L1021.7 726.9L1021.9 796.0L1022.1 712.1L1022.3 777.1L1022.5 779.9L1023.0 723.2L1023.2 788.2L1023.5 711.2L1023.7 800.7L1024.0 711.7L1024.1 821.0L1024.4 710.5L1024.7 761.2L1025.0 704.2L1025.0 694.4L1025.3 789.3L1025.9 726.7L1026.0 796.1L1026.1 713.3L1026.2 819.6L1026.8 723.9L1026.9 815.7L1027.2 723.8L1027.5 811.2L1027.6 709.9L1027.8 786.0L1028.0 729.8L1028.1 768.3L1028.6 797.0L1029.0 727.8L1029.2 717.9L1029.5 804.3L1029.7 741.3L1029.8 790.8L1030.1 749.5L1030.3 815.4L1030.7 760.2L1030.8 707.1L1031.2 760.3L1031.4 711.5L1031.8 818.1L1032.0 701.9L1032.0 709.8L1032.1 823.1L1032.5 720.2L1032.8 809.0L1033.0 723.8L1033.4 802.5L1033.7 807.8L1033.8 721.4L1034.1 754.6L1034.4 720.2L1034.7 724.2L1034.9 749.6L1035.2 763.5L1035.5 718.8L1035.7 776.1L1035.9 717.2L1036.1 787.3L1036.2 726.2L1036.8 747.6L1036.9 715.6L1037.3 814.8L1037.4 729.0L1037.9 722.5L1038.0 790.6L1038.0 705.9L1038.4 754.7L1038.7 770.5L1038.8 710.7L1039.1 784.0L1039.5 714.3L1039.5 717.6L1039.6 772.6L1040.1 758.4L1040.4 713.6L1040.6 717.5L1041.0 803.5L1041.1 811.1L1041.4 726.4L1041.8 785.4L1042.0 708.2L1042.3 716.6L1042.4 801.2L1042.6 721.9L1042.7 796.9L1043.0 726.4L1043.3 799.8L1043.7 712.6L1043.9 809.6L1044.4 727.0L1044.5 803.7L1044.8 774.9L1044.9 717.9L1045.1 780.7L1045.4 718.8L1045.7 803.6L1045.9 639.2L1046.4 725.8L1046.5 791.6L1046.5 769.6L1047.0 713.3L1047.0 728.7L1047.4 794.1L1047.6 767.2L1048.0 721.0L1048.1 807.7L1048.3 714.4L1048.8 634.8L1048.9 799.2L1049.3 709.3L1049.5 783.5L1049.6 816.3L1049.9 738.8L1050.4 821.3L1050.5 725.5L1050.7 788.1L1050.8 689.0L1051.0 856.4L1051.1 736.2L1051.8 778.3L1051.9 730.1L1052.2 769.9L1052.3 719.6L1052.9 783.9L1053.0 719.1L1053.2 820.0L1053.2 721.0L1053.6 716.4L1053.7 813.6L1054.0 787.5L1054.2 716.4L1054.6 720.4L1054.9 809.6L1055.1 717.6L1055.4 780.9L1055.7 793.4L1055.8 700.5L1056.1 797.4L1056.4 715.4L1056.6 785.4L1056.9 724.7L1057.4 762.0L1057.5 712.8L1057.8 709.1L1057.9 815.1L1058.1 715.9L1058.5 794.8L1058.8 706.8L1059.0 815.0L1059.2 815.0L1059.4 729.2L1059.5 843.0L1059.9 709.5L1060.3 817.3L1060.5 707.8L1060.6 706.5L1060.9 782.9L1061.0 813.7L1061.2 726.8L1061.7 720.3L1061.7 810.3L1062.0 801.9L1062.2 713.4L1062.7 703.6L1062.9 775.8L1063.0 716.1L1063.3 811.4L1063.7 781.0L1063.8 728.1L1064.3 802.5L1064.5 710.3L1064.5 708.6L1064.7 775.1L1065.0 709.1L1065.4 760.3L1065.7 799.3L1065.8 709.2L1066.1 725.4L1066.2 769.9L1066.7 714.1L1066.8 763.1L1067.1 816.5L1067.4 703.8L1067.7 773.8L1067.9 722.7L1068.2 719.1L1068.5 794.7L1068.7 788.1L1069.0 709.6L1069.0 695.2L1069.1 755.6L1069.7 716.7L1070.0 777.0L1070.2 706.1L1070.3 784.3L1070.6 726.2L1071.0 784.3L1071.1 711.8L1071.5 812.3L1071.6 823.6L1072.0 722.8L1072.0 878.0L1072.4 700.9L1072.6 785.5L1073.0 733.0L1073.4 815.7L1073.4 741.4L1073.6 783.9L1073.8 711.6L1074.1 785.2L1074.2 717.4L1074.8 786.4L1074.9 712.8L1075.1 714.0L1075.2 761.8L1075.8 736.8L1076.0 776.7L1076.0 703.3L1076.2 815.0L1076.7 722.5L1076.7 781.7L1077.1 708.7L1077.4 787.2L1077.6 707.6L1077.7 784.0L1078.1 732.6L1078.2 834.3L1078.6 793.7L1078.9 715.6L1079.2 730.8L1079.3 812.6L1079.5 781.6L1080.0 714.1L1080.1 785.5L1080.2 724.3L1080.6 777.1L1080.7 723.5L1081.1 702.2L1081.3 767.0L1081.7 795.6L1082.0 727.3L1082.1 787.8L1082.4 707.5L1082.5 812.7L1082.9 725.7L1083.0 787.9L1083.1 719.0L1083.7 733.3L1083.8 796.3L1084.2 779.8L1084.3 707.1L1084.6 721.8L1084.7 816.1L1085.2 707.5L1085.4 789.8L1085.9 777.0L1085.9 723.5L1086.3 777.3L1086.4 706.7L1086.8 718.8L1086.8 812.7L1087.0 728.2L1087.3 828.3L1087.7 776.8L1087.8 714.6L1088.2 794.8L1088.2 726.3L1088.6 702.5L1088.9 776.2L1089.0 824.3L1089.2 713.2L1089.7 775.0L1090.0 721.3L1090.2 717.1L1090.5 809.1L1090.7 825.0L1090.8 724.5L1091.1 736.5L1091.2 796.6L1091.5 759.8L1091.7 713.0L1092.1 706.0L1092.3 815.5L1092.7 805.3L1092.8 711.0L1093.2 799.7L1093.4 733.7L1093.6 726.1L1093.9 783.4L1094.2 705.9L1094.4 764.4L1094.8 806.2L1095.0 722.5L1095.1 718.5L1095.3 796.3L1095.7 775.3L1095.9 711.8L1096.3 814.6L1096.4 720.9L1096.5 822.4L1096.6 701.4L1097.0 717.6L1097.2 821.3L1097.6 713.5L1097.7 800.7L1098.1 723.9L1098.5 815.4L1098.7 819.2L1098.9 731.6L1099.0 825.6L1099.1 714.6L1099.5 731.4L1099.6 762.1L1100.0 811.8L1100.4 710.6L1100.6 712.8L1101.0 796.9L1101.0 778.4L1101.3 710.4L1101.7 814.6L1101.8 731.7L1102.4 800.6L1102.5 702.7L1102.5 704.9L1103.0 818.9L1103.2 780.8L1103.4 711.5L1103.6 727.9L1103.9 802.0L1104.2 782.9L1104.5 720.0L1104.6 781.7L1104.8 709.6L1105.1 721.7L1105.5 807.5L1105.6 710.0L1106.0 798.6L1106.3 715.9L1106.4 792.5L1106.6 815.1L1107.0 717.8L1107.0 721.2L1107.1 817.1L1107.6 809.7L1108.0 728.5L1108.1 720.6L1108.3 789.4L1108.5 713.3L1108.7 803.9L1109.4 723.0L1109.5 783.0L1109.8 774.5L1109.9 707.3L1110.0 765.7L1110.3 700.9L1110.5 776.4L1111.0 727.9L1111.2 799.1L1111.5 709.6L1111.8 822.3L1111.9 697.4L1112.4 706.2L1112.5 787.9L1112.5 808.1L1112.7 710.8L1113.1 814.3L1113.5 707.9L1113.5 717.6L1113.8 792.0L1114.1 716.0L1114.2 787.6L1114.7 708.5L1115.0 800.5L1115.3 795.9L1115.5 716.6L1115.5 725.5L1115.7 794.1L1116.0 796.2L1116.5 716.9L1116.8 711.2L1116.9 804.7L1117.2 720.4L1117.3 784.1L1117.5 731.1L1117.9 816.2L1118.0 714.6L1118.2 810.4L1118.6 814.0L1118.9 723.9L1119.1 720.6L1119.2 792.1L1119.5 725.2L1119.8 837.5L1120.1 785.3L1120.4 711.4L1120.5 714.9L1120.9 797.3L1121.3 810.4L1121.5 713.4L1121.7 708.8L1121.9 793.9L1122.1 720.3L1122.4 816.1L1122.8 731.8L1122.9 802.7L1123.0 711.3L1123.2 795.5L1123.5 786.4L1123.9 710.5L1124.1 812.9L1124.3 714.9L1124.5 795.6L1124.9 706.3L1125.1 796.4L1125.4 702.9L1125.7 775.0L1125.9 711.0L1126.1 778.8L1126.2 715.8L1126.7 721.1L1126.7 805.7L1127.1 710.9L1127.2 821.5L1127.6 852.0L1127.8 719.1L1128.1 711.8L1128.4 818.0L1128.8 783.1L1129.0 715.4L1129.0 710.6L1129.3 777.8L1129.7 805.2L1129.9 704.5L1130.3 780.6L1130.3 714.0L1130.7 720.8L1130.9 812.8L1131.2 804.1L1131.4 712.5L1131.5 715.1L1131.8 781.1L1132.4 847.5L1132.4 724.8L1132.5 797.0L1132.7 705.6L1133.0 788.4L1133.1 705.0L1133.6 792.8L1133.9 708.9L1134.4 743.2L1134.5 827.1L1134.6 727.0L1134.8 805.6L1135.0 783.7L1135.1 719.9L1135.6 828.5L1135.7 715.5L1136.1 713.7L1136.2 808.9L1136.6 701.6L1136.8 790.9L1137.3 699.9L1137.5 796.5L1137.7 714.8L1137.8 843.2L1138.1 707.1L1138.2 798.0L1138.8 700.5L1138.9 811.9L1139.1 722.4L1139.2 796.6L1139.7 847.3L1139.9 703.8L1140.2 791.1L1140.3 711.0L1140.6 708.7L1140.9 772.3L1141.0 712.4L1141.3 784.6L1141.5 714.4L1141.7 816.3L1142.1 793.2L1142.4 713.8L1142.6 711.7L1142.8 793.6L1143.2 715.5L1143.4 816.4L1143.7 842.1L1143.9 701.6L1144.2 814.4L1144.4 710.5L1144.6 791.5L1145.0 725.1L1145.0 706.3L1145.3 819.3L1145.7 790.5L1145.9 708.3L1146.1 722.0L1146.4 816.1L1146.8 705.1L1146.9 818.6L1147.0 717.8L1147.5 832.0L1147.9 711.1L1147.9 805.1L1148.2 707.4L1148.4 832.9L1148.5 782.7L1148.9 710.6L1149.1 716.9L1149.5 790.4L1149.7 781.9L1150.0 722.8L1150.2 715.0L1150.4 800.9L1150.8 856.0L1150.9 708.2L1151.0 717.9L1151.3 803.5L1151.6 715.3L1151.8 798.4L1152.2 729.5L1152.3 817.8L1152.7 779.5L1152.7 706.2L1153.2 794.1L1153.3 727.2L1153.5 695.9L1154.0 787.7L1154.1 714.4L1154.3 804.6L1154.8 796.5L1155.0 715.3L1155.2 701.1L1155.4 793.3L1155.7 806.0L1155.9 721.6L1156.1 802.2L1156.2 722.4L1156.6 715.7L1156.8 784.4L1157.3 715.1L1157.4 814.0L1157.8 711.9L1157.8 805.4L1158.2 715.5L1158.3 801.5L1158.7 726.6L1158.9 814.2L1159.1 778.1L1159.4 703.5L1159.6 713.7L1159.9 809.0L1160.3 700.8L1160.4 815.3L1160.5 796.8L1160.6 722.8L1161.1 699.1L1161.3 797.2L1161.6 717.4L1161.9 822.6L1162.0 794.6L1162.2 728.4L1162.7 815.0L1162.8 720.7L1163.1 722.7L1163.3 786.1L1163.9 791.8L1164.0 700.8L1164.0 712.2L1164.2 816.9L1164.6 709.1L1164.8 813.0L1165.4 704.5L1165.4 814.1L1165.6 717.2L1165.9 785.1L1166.3 713.1L1166.4 801.1L1166.7 796.6L1166.9 710.8L1167.2 720.2L1167.4 816.8L1167.8 818.3L1167.9 714.2L1168.2 715.2L1168.3 817.3L1168.7 783.2L1168.8 714.7L1169.2 788.2L1169.2 711.4L1169.6 827.2L1169.9 716.9L1170.1 708.5L1170.2 818.5L1170.6 805.6L1170.8 709.0L1171.0 704.3L1171.2 785.7L1171.5 805.3L1171.9 713.9L1172.4 820.0L1172.5 719.0L1172.7 713.4L1172.8 828.4L1173.3 818.3L1173.4 697.6L1173.5 713.7L1173.9 805.5L1174.1 819.4L1174.3 715.6L1174.6 726.4L1174.8 775.0L1175.2 709.3L1175.3 811.8L1175.9 726.0L1175.9 805.7L1176.0 720.0L1176.0 808.2L1176.9 804.7L1177.0 723.2L1177.0 711.5L1177.5 821.3L1177.6 721.7L1178.0 831.0L1178.3 792.6L1178.3 708.2L1178.8 830.9L1178.9 712.9L1179.1 807.2L1179.3 717.3L1179.6 712.3L1179.9 804.6L1180.1 794.8L1180.2 710.4L1180.7 817.4L1180.8 707.9L1181.2 724.5L1181.4 813.2L1181.6 697.4L1181.7 810.1L1182.0 709.9L1182.3 795.4L1182.6 714.5L1183.0 815.7L1183.1 714.8L1183.2 796.9L1183.8 807.3L1183.9 697.4L1184.1 706.0L1184.5 793.0L1184.6 713.3L1185.0 843.0L1185.2 714.9L1185.5 808.1L1185.7 707.0L1185.9 797.0L1186.3 703.8L1186.4 832.7L1186.6 815.8L1186.9 701.5L1187.1 704.9L1187.4 807.9L1187.7 715.9L1187.8 830.7L1188.0 783.1L1188.3 714.6L1188.7 808.8L1188.9 711.8L1189.0 812.2L1189.3 707.1L1189.5 804.2L1189.8 703.4L1190.0 813.4L1190.3 714.4L1190.6 719.7L1190.8 817.4L1191.2 717.1L1191.4 834.7L1191.6 726.4L1191.7 810.5L1192.2 709.1L1192.2 779.5L1192.6 721.6L1192.8 838.1L1193.1 803.5L1193.5 726.8L1193.8 844.0L1193.9 730.0L1194.4 800.0L1194.4 710.7L1194.6 824.6L1194.9 710.9L1195.0 706.1L1195.3 820.6L1195.6 812.2L1196.0 716.4L1196.3 792.4L1196.4 703.0L1196.5 713.4L1196.9 809.2L1197.2 792.9L1197.2 709.4L1197.6 813.0L1198.0 709.3L1198.1 800.7L1198.5 725.4L1199.0 704.5L1199.0 845.0L1199.0 704.5L1199.2 806.4L1199.8 814.6L1200.0 717.0L1200.0 716.3L1200.3 820.4L1200.6 700.0L1200.8 796.9L1201.0 705.0L1201.4 818.3L1201.6 824.4L1201.7 716.9L1202.1 709.0L1202.2 818.0L1202.6 713.0L1202.8 819.6L1203.2 712.2L1203.3 813.6L1203.9 852.0L1203.9 711.0L1204.2 719.4L1204.2 787.1L1204.8 702.5L1204.9 804.3L1205.0 843.0L1205.1 702.7L1205.7 717.4L1205.8 816.2L1206.1 712.6L1206.1 801.6L1206.6 787.7L1206.7 709.4L1207.1 794.6L1207.5 709.3L1207.5 712.3L1207.8 799.0L1208.1 707.9L1208.2 816.7L1208.6 803.3L1208.8 699.6L1209.1 814.4L1209.2 712.5L1209.7 822.6L1210.0 715.8L1210.1 708.7L1210.4 804.9L1210.7 812.2L1210.8 717.4L1211.4 813.3L1211.5 712.1L1211.6 824.1L1211.8 710.2L1212.1 707.9L1212.3 803.8L1212.6 817.9L1213.0 724.6L1213.2 721.9L1213.3 796.7L1213.7 707.7L1213.9 808.8L1214.0 807.9L1214.0 709.8L1214.5 810.4L1214.6 720.0L1215.2 801.6L1215.4 715.9L1215.7 702.8L1215.8 829.7L1216.3 718.0L1216.3 829.0L1216.9 717.7L1216.9 816.4L1217.1 714.8L1217.5 816.1L1217.7 789.2L1218.0 709.9L1218.3 805.0L1218.5 711.7L1218.5 711.5L1218.6 808.5L1219.1 713.8L1219.2 810.1L1219.7 699.9L1219.8 817.7L1220.4 713.6L1220.5 808.1L1220.5 812.8L1220.8 719.2L1221.0 766.9L1221.0 744.4" stroke="#000" stroke-width="2" fill="none" stroke-linejoin="round" stroke-linecap="round"/>
<!-- cursor lines -->
<path d="M56 280.5H1259" stroke="#000" stroke-width="1" fill="none"/>
<path d="M357.5 85V919" stroke="#000" stroke-width="1" fill="none"/>
<defs>
<linearGradient id="gFl" x1="0" y1="0" x2="0" y2="1"><stop offset="0" stop-color="#ffffff"/><stop offset="1" stop-color="#c9d2d8"/></linearGradient>
<linearGradient id="gLens" x1="0" y1="0" x2="1" y2="1"><stop offset="0" stop-color="#f4f4f4"/><stop offset=".5" stop-color="#a8a8a8"/><stop offset="1" stop-color="#dcdcdc"/></linearGradient>
<linearGradient id="gCam" x1="0" y1="0" x2="0" y2="1"><stop offset="0" stop-color="#f6f6f6"/><stop offset="1" stop-color="#d4d4d4"/></linearGradient>
<radialGradient id="gRec" cx=".45" cy=".4" r=".6"><stop offset="0" stop-color="#ff8a5c"/><stop offset=".6" stop-color="#f4512c"/><stop offset="1" stop-color="#b8340f"/></radialGradient>
<linearGradient id="gGear" x1="0" y1="0" x2="0" y2="1"><stop offset="0" stop-color="#dadada"/><stop offset="1" stop-color="#929292"/></linearGradient>
<g id="floppy">
 <path d="M0 0H14V14H0Z" fill="#3a3a3a"/>
 <rect x="2.4" y="0.4" width="9.2" height="6.8" fill="url(#gFl)"/>
 <path d="M2.4 2.6H11.6M2.4 4.6H11.6" stroke="#dfe6ea" stroke-width=".8"/>
 <rect x="3.6" y="9.6" width="6.8" height="4.2" fill="#c4c4c4"/>
 <rect x="4.2" y="10.2" width="2" height="3" fill="#2c2c2c"/>
</g>
<g id="zring">
 <circle cx="0" cy="0" r="5.9" fill="rgba(190,190,190,.55)" stroke="#383838" stroke-width="1.8"/>
</g>
</defs>
<!-- floppy icons -->
<use href="#floppy" x="461" y="30"/>
<use href="#floppy" x="519" y="30"/>
<use href="#floppy" x="577" y="30"/>
<!-- folder (disabled) -->
<g fill="#a4a4a4">
 <path d="M408.2 31.2h5.2l1 1.2h6.6q.8 0 .8.8v4.6h-13.6z"/>
 <path d="M407 37.6q0-.9.9-.9h14.2q.9 0 .9.900v5q0 1.600-1.600 1.600h-12.800q-1.600 0-1.600-1.600z"/>
</g>
<!-- import icon -->
<rect x="638" y="32" width="24.100" height="27.800" fill="#fff"/>
<g stroke="#000" stroke-width="2" fill="none">
 <path d="M638 36.600V32H662.100V59.800H638V55.200"/>
 <g stroke-linecap="round" stroke-linejoin="round">
 <path d="M635.200 39.800H643.600M640.400 36.300L644 39.800L640.400 43.300"/>
 <path d="M635.200 51.900H643.600M640.400 48.400L644 51.900L640.400 55.400"/>
 </g>
</g>
<!-- camera -->
<g>
 <rect x="28.200" y="36.2" width="5.600" height="2.400" fill="#e4e4e4" stroke="#b0b0b0" stroke-width=".6"/>
 <rect x="24.400" y="38.2" width="29.400" height="18.400" fill="url(#gCam)" stroke="#8a8a8a" stroke-width="1"/>
 <path d="M25 38.800L34.500 38.800L29.500 47L28.500 55.900L25 55.900Z" fill="#fff" opacity=".55"/>
 <circle cx="43.500" cy="47.500" r="7.300" fill="url(#gLens)" stroke="#9a9a9a" stroke-width=".8"/>
 <circle cx="43.500" cy="47.500" r="2.600" fill="#1c1c1c"/>
 <circle cx="42.600" cy="46.600" r=".9" fill="#e8e8e8"/>
</g>
<!-- java icon -->
<g>
 <rect x="2.400" y="3.200" width="15.400" height="15.300" fill="#f1f3f8"/>
 <path d="M7 10.500L14 10L15 17.800L5.500 16.500Z" fill="#e2e2e4"/>
 <path d="M9.400 4L13.900 8.600L10.400 12.500L7.800 9Z" fill="#2c1416"/>
 <circle cx="10.800" cy="9" r="1.700" fill="#e8485a"/>
 <ellipse cx="4.500" cy="11.900" rx="1.800" ry="1.400" fill="#2c3242"/>
 <circle cx="5.300" cy="11.200" r=".7" fill="#dfe8f4"/>
 <ellipse cx="15.600" cy="12.100" rx=".9" ry="1.100" fill="#1c1c20"/>
 <path d="M4.300 16.300Q9 15.200 13.300 17.300" stroke="#4c4c50" stroke-width="1" fill="none"/>
</g>
<!-- window controls -->
<rect x="1188" y="11" width="8" height="2" fill="#14352a"/>
<g fill="none" stroke="#14352a" stroke-width="1.200">
 <rect x="1213.600" y="7.100" width="7" height="6.300"/>
 <path d="M1215.900 7.100V4.800H1222.900V11.100H1220.600"/>
</g>
<path d="M1251 5.400L1259 13.400M1259 5.400L1251 13.400" stroke="#fff" stroke-width="1.800" fill="none"/>
<!-- right toolbar icons -->
<g>
 <rect x="1111.500" y="34.500" width="28" height="16" fill="#b6b6b6" stroke="#8a8a8a" stroke-width="1"/>
 <path d="M1104 36.600L1106.500 34L1109 36.600Z M1104 48.400L1106.500 51L1109 48.400Z" fill="#000"/>
 <rect x="1104.400" y="40.400" width="4.400" height="4.400" fill="#5e5e5e" stroke="#2a2a2a" stroke-width=".9"/>
 <path d="M1113.800 52.400L1111.200 54.600L1113.800 56.800Z M1136.600 52.400L1139.200 54.600L1136.600 56.800Z" fill="#000"/>
 <rect x="1120.400" y="52.700" width="9.200" height="3.800" fill="#5e5e5e" stroke="#2a2a2a" stroke-width=".9"/>
</g>
<g>
 <rect x="1152.500" y="34.500" width="35" height="23" fill="#fff" stroke="#bdbdbd" stroke-width="1"/>
 <path d="M1165.500 34.500V57.500M1173.500 34.500V57.500M1179.500 34.500V57.500M1183.500 34.500V57.500" stroke="#c4c4c4" stroke-width="1"/>
</g>
<g>
 <rect x="1200.500" y="34.500" width="35" height="23" fill="#fff" stroke="#bdbdbd" stroke-width="1"/>
 <g stroke="#000" stroke-width="2.300" fill="none" stroke-linecap="round" stroke-linejoin="round">
  <path d="M1217.900 37.200V42.800M1214.800 40L1217.900 36.900L1221 40"/>
  <path d="M1217.900 54.800V49.200M1214.800 52L1217.900 55.100L1221 52"/>
  <path d="M1203.300 46H1208.900M1206.100 42.900L1203 46L1206.100 49.100"/>
  <path d="M1232.600 46H1227M1229.800 42.900L1232.900 46L1229.800 49.100"/>
 </g>
</g>
<!-- gear -->
<g transform="translate(1259.900 46)">
 <path d="M-1.33 -8.40L-1.13 -10.74L1.13 -10.74L1.33 -8.40L3.05 -7.94L4.39 -9.87L6.35 -8.74L5.35 -6.61L6.61 -5.35L8.74 -6.35L9.87 -4.39L7.94 -3.05L8.40 -1.33L10.74 -1.13L10.74 1.13L8.40 1.33L7.94 3.05L9.87 4.39L8.74 6.35L6.61 5.35L5.35 6.61L6.35 8.74L4.39 9.87L3.05 7.94L1.33 8.40L1.13 10.74L-1.13 10.74L-1.33 8.40L-3.05 7.94L-4.39 9.87L-6.35 8.74L-5.35 6.61L-6.61 5.35L-8.74 6.35L-9.87 4.39L-7.94 3.05L-8.40 1.33L-10.74 1.13L-10.74 -1.13L-8.40 -1.33L-7.94 -3.05L-9.87 -4.39L-8.74 -6.35L-6.61 -5.35L-5.35 -6.61L-6.35 -8.74L-4.39 -9.87L-3.05 -7.94Z" fill="url(#gGear)" stroke="#9c9c9c" stroke-width=".6" stroke-linejoin="round"/>
 <circle r="5.400" fill="none" stroke="#8a8a8a" stroke-width="1.200" opacity=".7"/>
 <circle r="3.800" fill="#c4c4c4"/>
 <rect x="-2.100" y="-2.100" width="4.200" height="4.200" rx="1" fill="#fdfdfd"/>
</g>
<!-- zoom icons top-left -->
<g transform="translate(70.400 97.400)"><use href="#zring"/><path d="M-3.700 0H3.700M0 -3.700V3.700" stroke="#2e2e2e" stroke-width="2.800"/></g>
<g transform="translate(70.400 119.400)"><use href="#zring"/><path d="M-3.700 0H3.700" stroke="#2e2e2e" stroke-width="2.800"/></g>
<!-- zoom icons bottom-right -->
<g transform="translate(1221.500 902.200)"><use href="#zring"/><path d="M-3.700 0H3.700" stroke="#2e2e2e" stroke-width="2.800"/></g>
<g transform="translate(1245.300 902.200)"><use href="#zring"/><path d="M-3.700 0H3.700M0 -3.700V3.700" stroke="#2e2e2e" stroke-width="2.800"/></g>

</svg>

<div class="hl" style="left:483px;top:203.5px">1</div>
<div class="hl" style="left:570.5px;top:546.5px">2</div>
<div class="hl" style="left:621.5px;top:565.5px">3</div>
<div class="hl" style="left:685.5px;top:660.5px">5</div>
<div class="hl g" style="left:657.5px;top:713.5px">4</div>
<div class="hl g" style="left:707.5px;top:736.5px">6</div>
<div class="hl" style="left:727.5px;top:711.5px">7</div>
<div class="hl g" style="left:743.5px;top:759.5px">8</div>
<div class="hl g" style="left:759.5px;top:710.5px">9</div>

<!-- distortion box -->
<div class="box" style="left:124px;top:87.4px;width:253.4px;height:181.2px">
 <div class="row" style="left:0;width:247.4px;text-align:center;top:7.1px"><b>60,58 Hz, -46,56 dBFS, 32,90 dB</b></div>
 <div class="row" style="left:0;width:243.6px;text-align:center;top:26.1px;letter-spacing:.1px">Span: <b>0 .. 20 947 Hz</b></div>
 <div class="row" style="left:0;width:31.2px;text-align:right;top:45.1px">N+D:</div><div class="row" style="left:36.2px;top:45.1px"><b>-15,8 dB A</b></div>
 <div class="row" style="left:0;width:31.2px;text-align:right;top:64.1px">N:</div><div class="row" style="left:36.2px;top:64.1px"><b>-13,8 dB</b></div>
 <div class="row" style="left:0;width:103px;text-align:center;top:83.1px">HH 10 .. 50</div>
 <div class="row" style="left:0;width:31.2px;text-align:right;top:102.1px">2nd:</div><div class="row" style="left:36.2px;top:102.1px"><b>0,15 %</b></div>
 <div class="row" style="left:0;width:31.2px;text-align:right;top:121.1px">4th:</div><div class="row" style="left:36.2px;top:121.1px"><b>0,0087 %</b></div>
 <div class="row" style="left:0;width:31.2px;text-align:right;top:140.1px">6th:</div><div class="row" style="left:36.2px;top:140.1px"><b>0,0059 %</b></div>
 <div class="row" style="left:0;width:31.2px;text-align:right;top:159.1px">8th:</div><div class="row" style="left:36.2px;top:159.1px"><b>0,0072 %</b></div>
 <div class="row" style="left:110px;width:53.2px;text-align:right;top:45.1px">THD:</div><div class="row" style="left:167.5px;top:45.1px"><b>0,20 %</b></div>
 <div class="row" style="left:110px;width:53.2px;text-align:right;top:64.1px">THD+N:</div><div class="row" style="left:167.5px;top:64.1px"><b>0,50 %</b></div>
 <div class="row" style="left:110px;width:53.2px;text-align:right;top:83.1px">HHD:</div><div class="row" style="left:167.5px;top:83.1px"><b>0,042 %</b></div>
 <div class="row" style="left:110px;width:53.2px;text-align:right;top:102.1px">3rd:</div><div class="row" style="left:167.5px;top:102.1px"><b>0,11 %</b></div>
 <div class="row" style="left:110px;width:53.2px;text-align:right;top:121.1px">5th:</div><div class="row" style="left:167.5px;top:121.1px"><b>0,024 %</b></div>
 <div class="row" style="left:110px;width:53.2px;text-align:right;top:140.1px">7th:</div><div class="row" style="left:167.5px;top:140.1px"><b>0,0074 %</b></div>
 <div class="row" style="left:110px;width:53.2px;text-align:right;top:159.1px">9th:</div><div class="row" style="left:167.5px;top:159.1px"><b>0,0076 %</b></div>
</div>

<!-- info box -->
<div class="box" style="left:1025.2px;top:87.1px;width:138.6px;height:69.7px;text-align:center">
 <div class="abs" style="left:0;width:132.6px;top:7.8px;font-size:16.6px;line-height:18px;font-weight:bold">32,90 dB</div>
 <div class="abs" style="left:0;width:132.6px;top:26.7px;font-size:9.5px;line-height:11px;font-weight:bold;letter-spacing:.16px">32,0 dB C, 6,1 dB A</div>
 <div class="abs" style="left:0;width:132.6px;top:38.7px;font-size:9.5px;line-height:11px;font-weight:bold;letter-spacing:-.06px">Peak sample: -46,50 dBFS</div>
 <div class="abs" style="left:0;width:132.6px;top:50.7px;font-size:9.5px;line-height:11px;font-weight:bold;letter-spacing:.055px">32,9 dB 22 - 22k UNW</div>
</div>

<!-- averages box -->
<div class="box" style="left:59px;top:874px;width:108px;height:34px;font-size:16.3px;font-weight:bold;line-height:32.400px;text-align:center;border-radius:10px;padding-right:1px">2 averages</div>

<!-- range buttons -->
<div class="sbtn" style="top:849px">10 .. 200</div>
<div class="sbtn" style="top:871px">20 .. 20 000</div>


<!-- vertical scrollbar -->
<div class="abs" style="left:2px;top:85px;width:16px;height:831px;background:#fff;border:1px solid #848484"></div>
<div class="abs" style="left:2px;top:85px;width:16px;height:16px;border:1px solid #848484;background:linear-gradient(135deg,#fafafa,#cfcfcf)"></div>
<div class="abs" style="left:2px;top:900px;width:16px;height:16px;border:1px solid #848484;background:linear-gradient(135deg,#fafafa,#cfcfcf)"></div>
<div class="abs" style="left:2px;top:335px;width:16px;height:263px;border:1px solid #848484;background:linear-gradient(90deg,#ffffff 5%,#c8c8c8 95%)"></div>
<!-- horizontal scrollbar -->
<div class="abs" style="left:57px;top:939px;width:1202px;height:16px;background:#fff;border:1px solid #7c7c7c"></div>
<div class="abs" style="left:57px;top:939px;width:16px;height:16px;border:1px solid #848484;background:linear-gradient(135deg,#fafafa,#cfcfcf)"></div>
<div class="abs" style="left:1243px;top:939px;width:16px;height:16px;border:1px solid #848484;background:linear-gradient(135deg,#fafafa,#cfcfcf)"></div>
<div class="abs" style="left:251px;top:939px;width:993px;height:16px;border:1px solid #848484;background:linear-gradient(180deg,#ffffff 5%,#c8c8c8 95%)"></div>
<!-- SPL dropdown -->
<div class="abs" style="left:59px;top:133px;width:62px;height:21px;border:1px solid #8a8a8a;background:#fff;font-size:11px;line-height:21px;padding-left:7px">SPL</div>
<div class="abs" style="left:104px;top:133px;width:17px;height:21px;border:1px solid #8a8a8a;background:linear-gradient(#fbfbfb,#cdcdcd)"></div>
<!-- record button -->
<div class="abs" style="left:1209px;top:87px;width:48px;height:44px;border-radius:5px;border:2px solid;border-color:#4f5d5d #6c7c7d #8c9c9c #6c7c7d;background:linear-gradient(#adbcbe,#bfcfd2 14%,#bdcfd2 84%,#dfeaea 97%)"></div>
<div class="abs" style="left:1227px;top:102px;width:12px;height:12px;border-radius:50%;background:radial-gradient(circle at 50% 58%,#ff9c7c,#f5562f 50%,#c63c14 85%,#a83210);box-shadow:0 1px 2px 1px rgba(255,160,130,.7)"></div>

<!-- cursors labels -->
<div class="cur" style="left:30px;top:273px;width:26px;height:15px">23,5</div>
<div class="cur" style="left:344px;top:919px;width:26px;height:15px">22,0</div>

<!-- legend -->
<div class="abs" style="left:130px;top:958.7px;width:1054.2px;height:19.6px;background:#fff;box-shadow:0 0 2px 1.2px rgba(70,70,70,.62),0 0 4px 1px rgba(70,70,70,.25)"></div>
<div class="cb" style="left:135px"></div>
<div class="lg" style="left:155px;color:#2a6cb4">311</div>
<div class="abs" style="left:320px;top:967.5px;width:49px;height:2px;background:#1464b4"></div>
<div class="lg" style="left:409px;color:#2a6cb4">68,0 dB</div>
<div class="cb" style="left:483px"></div>
<div class="lg" style="left:503px">Spectrum</div>
<div class="abs" style="left:668px;top:967.5px;width:49px;height:2px;background:#000"></div>
<div class="lg" style="left:752px">-52,5 dB</div>
<div class="cb" style="left:831px"></div>
<div class="lg" style="left:851px;color:#9c1018">Peak</div>
<div class="lg" style="left:1105px;color:#9c1018">29,9 dB</div>

<svg class="abs" style="left:0;top:0;pointer-events:none" width="1280" height="1024" viewBox="0 0 1280 1024">
 <path d="M6.800 95.300L10.400 91.200L14 95.300Z" fill="#333"/>
 <path d="M6.800 906.200L10.400 910.300L14 906.200Z" fill="#333"/>
 <path d="M67.300 943.700L62.900 947.400L67.300 951.100Z" fill="#333"/>
 <path d="M1249 943.700L1253.400 947.400L1249 951.100Z" fill="#333"/>
 <path d="M108.200 141.200L112.500 146L116.800 141.200Z" fill="#3c3c3c"/>
 <g fill="none" stroke="#000" stroke-width="1.900" stroke-linecap="round" stroke-linejoin="round">
  <path d="M138.600 967.800L141.600 971.800L146.600 962.200"/>
  <path d="M486.600 967.800L489.600 971.800L494.600 962.200"/>
 </g>
 <path d="M832 49L837 49L832 54Z" fill="#444"/>
</svg>
</body>
</html>
